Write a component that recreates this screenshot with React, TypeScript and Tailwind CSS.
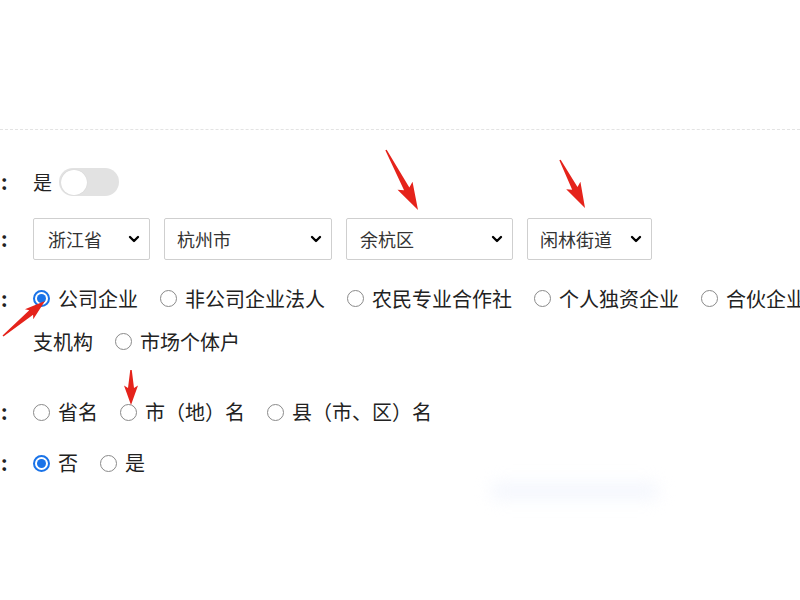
import { ChevronDown } from 'lucide-react';

const font = { fontFamily: '"Noto Sans CJK SC", "Microsoft YaHei", sans-serif' };

function Radio({ checked = false }: { checked?: boolean }) {
  return checked ? (
    <span className="inline-flex w-[17px] h-[17px] rounded-full border-[2px] border-[#1a73e8] items-center justify-center shrink-0">
      <span className="w-[9px] h-[9px] rounded-full bg-[#1a73e8]" />
    </span>
  ) : (
    <span className="inline-block w-[17px] h-[17px] rounded-full border border-[#8a8a8a] bg-white shrink-0" />
  );
}

function Option({ label, checked, gap = 'mr-[22px]' }: { label: string; checked?: boolean; gap?: string }) {
  return (
    <span className={`inline-flex items-center gap-[8px] whitespace-nowrap ${gap}`}>
      <Radio checked={checked} />
      <span>{label}</span>
    </span>
  );
}

function Select({ value, w, pl }: { value: string; w: string; pl: string }) {
  return (
    <div className={`${w} ${pl} h-[42px] border border-[#cfcfcf] rounded-[2px] bg-white flex items-center justify-between pr-[7px] text-[18px] text-[#333]`}>
      <span>{value}</span>
      <ChevronDown size={16} strokeWidth={3.5} className="text-[#000]" />
    </div>
  );
}

function Colon() {
  return <span className="w-[33px] shrink-0 pl-[1px] text-[20px] font-bold text-[#222]">:</span>;
}

type Pt = [number, number];

function arrowPoints(tail: Pt, tip: Pt, headLen: number, headW: number, neckW: number, tailW: number) {
  const dx = tip[0] - tail[0];
  const dy = tip[1] - tail[1];
  const len = Math.hypot(dx, dy);
  const ux = dx / len;
  const uy = dy / len;
  const nx = -uy;
  const ny = ux;
  const neck: Pt = [tip[0] - ux * headLen, tip[1] - uy * headLen];
  const back: Pt = [tip[0] - ux * headLen * 1.15, tip[1] - uy * headLen * 1.15];
  const p = (base: Pt, w: number): string => `${base[0] + nx * w},${base[1] + ny * w}`;
  return [
    p(tail, tailW / 2),
    p(neck, neckW / 2),
    p(back, headW / 2),
    `${tip[0]},${tip[1]}`,
    p(back, -headW / 2),
    p(neck, -neckW / 2),
    p(tail, -tailW / 2),
  ].join(' ');
}

function Arrows() {
  const arrows: [Pt, Pt, number, number][] = [
    [[386, 150], [418, 210], 24, 17],
    [[560, 160], [585, 208], 22, 16],
    [[3, 336], [45, 301], 18, 13],
    [[131, 370], [131, 405], 17, 14],
  ];
  return (
    <svg className="absolute inset-0 pointer-events-none" width={800} height={600}>
      {arrows.map(([a, b, hl, hw], i) => (
        <polygon key={i} points={arrowPoints(a, b, hl, hw, 6, 1.5)} fill="#e5231b" />
      ))}
    </svg>
  );
}

export default function App() {
  return (
    <div className="relative w-[800px] h-[600px] bg-white overflow-hidden text-[#333]" style={font}>
      <div className="absolute left-[490px] top-[482px] w-[170px] h-[18px] rounded-full bg-[#eef2fc] blur-[8px] opacity-60" />

      <div className="relative">
        <div className="h-[129px]" />
        <div className="border-t border-dashed border-[#e3e3e3]" />

        {/* 是否 toggle */}
        <div className="flex items-center mt-[38px] h-[28px]">
          <Colon />
          <span className="text-[19px] text-[#222] mr-[7px]">是</span>
          <span className="w-[60px] h-[28px] rounded-full bg-[#e2e2e2] flex items-center pl-[2px]">
            <span className="w-[26px] h-[25px] rounded-full bg-white shadow-[0_0_1px_rgba(0,0,0,0.15)]" />
          </span>
        </div>

        {/* 地址 */}
        <div className="flex items-center mt-[22px] h-[42px]">
          <Colon />
          <div className="flex gap-[14px]">
            <Select value="浙江省" w="w-[117px]" pl="pl-[14px]" />
            <Select value="杭州市" w="w-[168px]" pl="pl-[12px]" />
            <Select value="余杭区" w="w-[167px]" pl="pl-[13px]" />
            <Select value="闲林街道" w="w-[125px]" pl="pl-[12px]" />
          </div>
        </div>

        {/* 企业类型 */}
        <div className="flex mt-[17px] text-[20px] leading-[43px] text-[#222]">
          <Colon />
          <div className="flex flex-col">
            <div className="flex items-center whitespace-nowrap">
              <Option label="公司企业" checked />
              <Option label="非公司企业法人" />
              <Option label="农民专业合作社" />
              <Option label="个人独资企业" />
              <Option label="合伙企业分" gap="" />
            </div>
            <div className="flex items-center">
              <span className="mr-[22px]">支机构</span>
              <Option label="市场个体户" />
            </div>
          </div>
        </div>

        {/* 行政区划 */}
        <div className="flex items-center mt-[29px] h-[40px] text-[20px] text-[#222]">
          <Colon />
          <Option label="省名" />
          <Option label="市（地）名" />
          <Option label="县（市、区）名" />
        </div>

        {/* 是否 */}
        <div className="flex items-center mt-[11px] h-[40px] text-[20px] text-[#222]">
          <Colon />
          <Option label="否" checked />
          <Option label="是" />
        </div>
      </div>

      <Arrows />
    </div>
  );
}
